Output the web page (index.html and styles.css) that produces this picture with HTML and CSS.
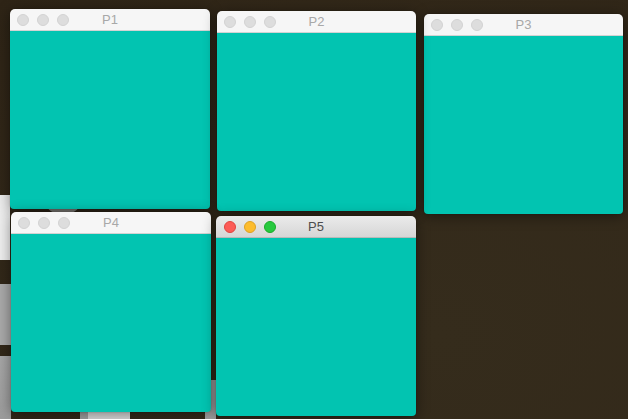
FILE: index.html
```html
<!DOCTYPE html>
<html lang="en">
<head>
<meta charset="utf-8">
<title>Windows</title>
<link rel="stylesheet" href="styles.css">
</head>
<body>
<div class="desktop">
  <div class="deco deco-a"></div>
  <div class="deco deco-b"></div>
  <div class="deco deco-c"></div>
  <div class="deco deco-d"></div>
  <div class="deco deco-e"></div>
  <div class="deco deco-f"></div>
  <div class="deco deco-g"></div>

  <div class="window p1">
    <div class="titlebar">
      <div class="lights"><span class="light"></span><span class="light"></span><span class="light"></span></div>
      <div class="title">P1</div>
    </div>
    <div class="content"></div>
  </div>

  <div class="window p3">
    <div class="titlebar">
      <div class="lights"><span class="light"></span><span class="light"></span><span class="light"></span></div>
      <div class="title">P3</div>
    </div>
    <div class="content"></div>
  </div>

  <div class="window p2">
    <div class="titlebar">
      <div class="lights"><span class="light"></span><span class="light"></span><span class="light"></span></div>
      <div class="title">P2</div>
    </div>
    <div class="content"></div>
  </div>

  <div class="window p4">
    <div class="titlebar">
      <div class="lights"><span class="light"></span><span class="light"></span><span class="light"></span></div>
      <div class="title">P4</div>
    </div>
    <div class="content"></div>
  </div>

  <div class="window p5 active">
    <div class="titlebar">
      <div class="lights"><span class="light red"></span><span class="light yellow"></span><span class="light green"></span></div>
      <div class="title">P5</div>
    </div>
    <div class="content"></div>
  </div>
</div>
</body>
</html>
```

FILE: styles.css
```css
html, body {
  margin: 0;
  padding: 0;
}

body {
  width: 628px;
  height: 419px;
  overflow: hidden;
  font-family: "Liberation Sans", Arial, sans-serif;
}

.desktop {
  position: relative;
  width: 628px;
  height: 419px;
  background: radial-gradient(ellipse at 70% 80%, #352c1c 0%, #33291a 55%, #2e2416 100%);
}

/* desktop items peeking out from behind the windows */
.deco {
  position: absolute;
}
.deco-a { left: 0; top: 195px; width: 10px; height: 65px; background: #eeeeee; }
.deco-b { left: 0; top: 284px; width: 11px; height: 61px; background: #a9a9a9; }
.deco-c { left: 0; top: 356px; width: 11px; height: 63px; background: linear-gradient(#a6a6a6, #9c9c9c); }
.deco-d { left: 80px; top: 410px; width: 50px; height: 9px; background: #a0a0a0; }
.deco-e { left: 88px; top: 411px; width: 42px; height: 8px; background: #d9d9d9; }
.deco-f { left: 205px; top: 380px; width: 11px; height: 39px; background: #a4a4a4; }
.deco-g { left: 48px; top: 200px; width: 30px; height: 14px; border-radius: 50%; background: #8d8a84; }

.window {
  position: absolute;
  width: 200px;
  height: 200px;
  display: flex;
  flex-direction: column;
  border-radius: 5px 5px 4px 4px;
  overflow: hidden;
  box-shadow: 0 2px 14px rgba(0, 0, 0, 0.45), 0 0 1px rgba(0, 0, 0, 0.5);
}

.p1 { left: 10px; top: 9px; }
.p2 { left: 217px; top: 11px; width: 199px; }
.p3 { left: 424px; top: 14px; width: 199px; }
.p4 { left: 11px; top: 212px; }
.p5 { left: 216px; top: 216px; }

.titlebar {
  flex: none;
  height: 21px;
  display: grid;
  grid-template-columns: 1fr auto 1fr;
  align-items: center;
  background: #f6f6f6;
  border-bottom: 1px solid #d3d3d3;
}

.lights {
  display: flex;
  gap: 8px;
  padding-left: 7px;
}

.light {
  width: 12px;
  height: 12px;
  box-sizing: border-box;
  border-radius: 50%;
  background: #dddddd;
  border: 1px solid #d2d2d2;
}

.title {
  grid-column: 2;
  font-size: 13px;
  color: #a8a8a8;
  line-height: 21px;
}

.content {
  flex: 1;
  background: #02c4b1;
}

.active .titlebar {
  background: linear-gradient(#ebebeb, #d6d6d6);
  border-bottom-color: #b9b9b9;
}
.active .lights { padding-left: 8px; }
.active .title { color: #4d4d4d; }
.light.red { background: #fc5b57; border-color: #e0443e; }
.light.yellow { background: #fdbc2e; border-color: #dea123; }
.light.green { background: #27c93f; border-color: #1aab29; }
```
